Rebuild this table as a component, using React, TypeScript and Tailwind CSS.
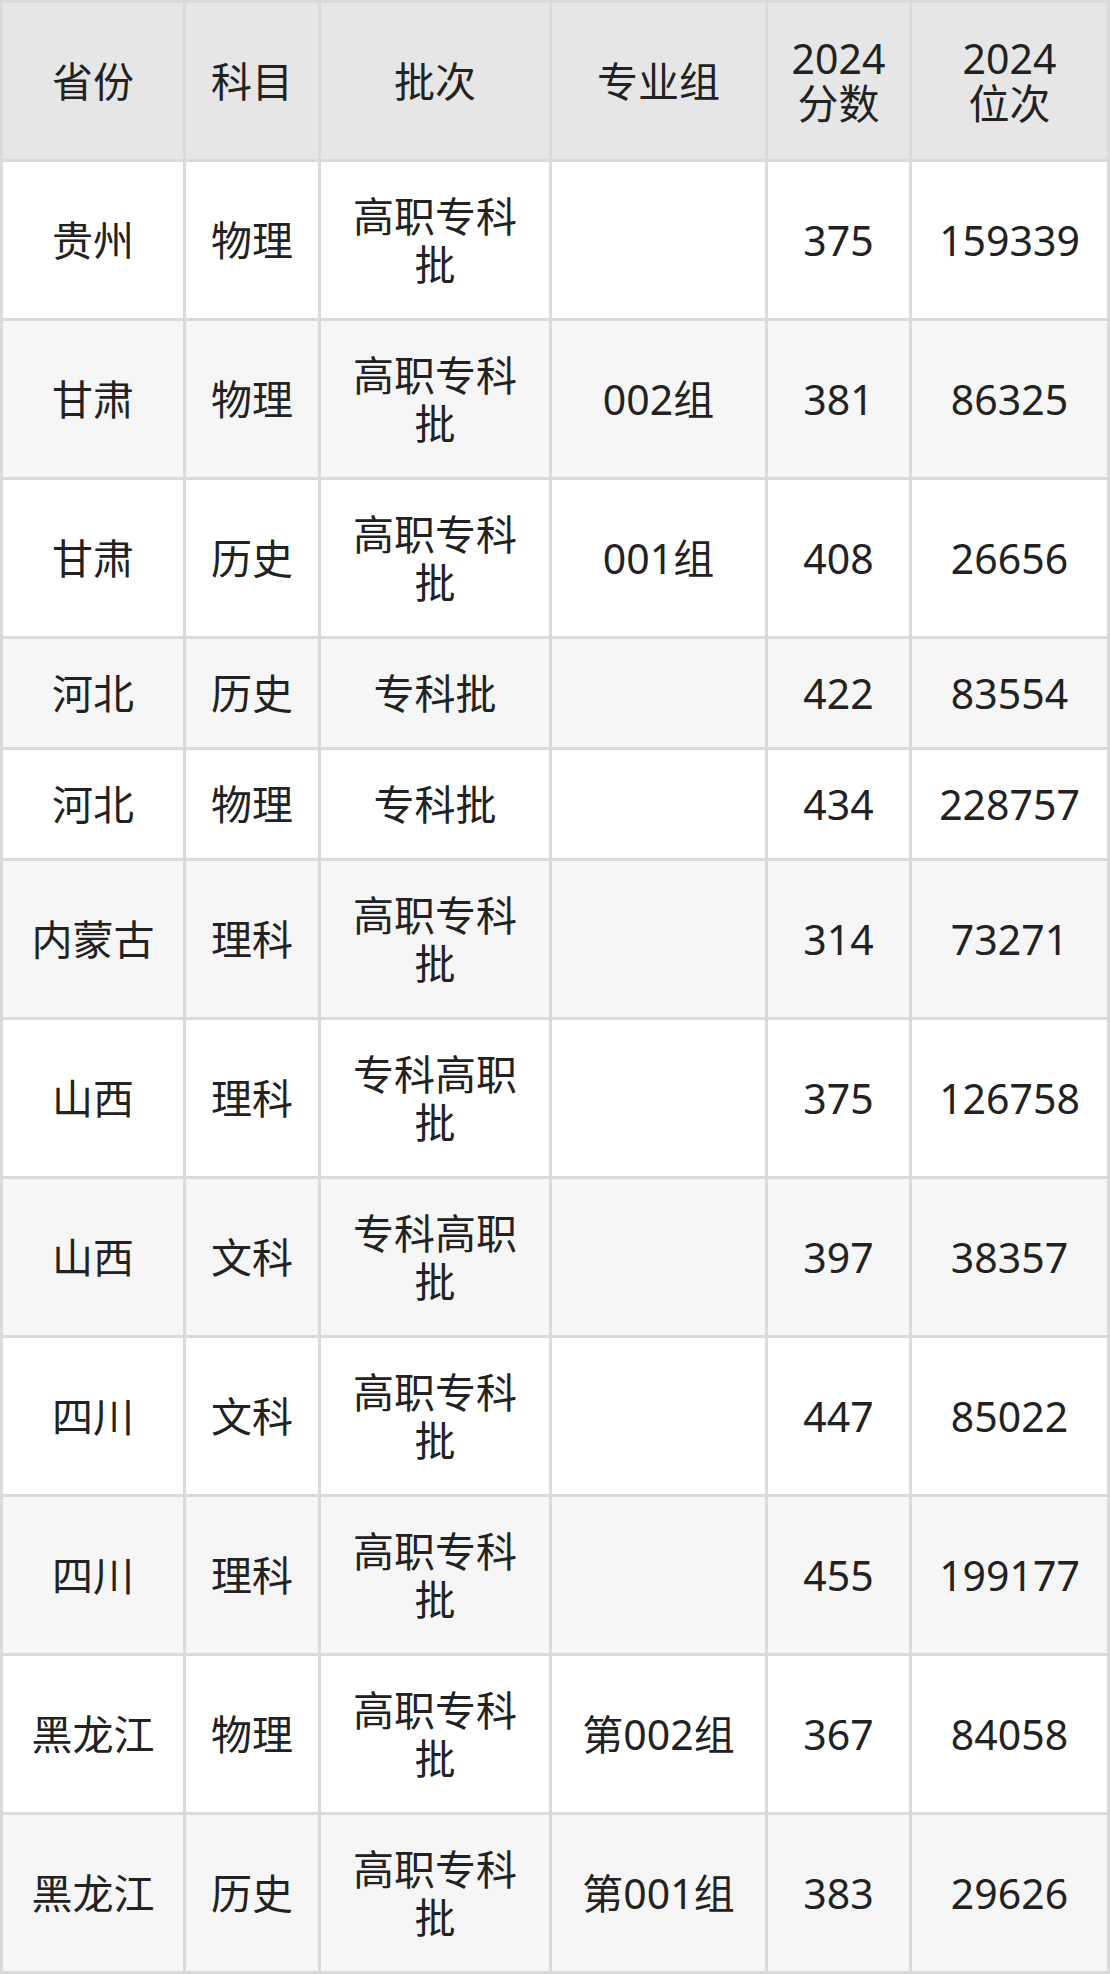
import React from "react";

type Row = {
  province: string;
  subject: string;
  batch: string[];
  group: string;
  score: string;
  rank: string;
};

const rows: Row[] = [
  { province: "贵州", subject: "物理", batch: ["高职专科", "批"], group: "", score: "375", rank: "159339" },
  { province: "甘肃", subject: "物理", batch: ["高职专科", "批"], group: "002组", score: "381", rank: "86325" },
  { province: "甘肃", subject: "历史", batch: ["高职专科", "批"], group: "001组", score: "408", rank: "26656" },
  { province: "河北", subject: "历史", batch: ["专科批"], group: "", score: "422", rank: "83554" },
  { province: "河北", subject: "物理", batch: ["专科批"], group: "", score: "434", rank: "228757" },
  { province: "内蒙古", subject: "理科", batch: ["高职专科", "批"], group: "", score: "314", rank: "73271" },
  { province: "山西", subject: "理科", batch: ["专科高职", "批"], group: "", score: "375", rank: "126758" },
  { province: "山西", subject: "文科", batch: ["专科高职", "批"], group: "", score: "397", rank: "38357" },
  { province: "四川", subject: "文科", batch: ["高职专科", "批"], group: "", score: "447", rank: "85022" },
  { province: "四川", subject: "理科", batch: ["高职专科", "批"], group: "", score: "455", rank: "199177" },
  { province: "黑龙江", subject: "物理", batch: ["高职专科", "批"], group: "第002组", score: "367", rank: "84058" },
  { province: "黑龙江", subject: "历史", batch: ["高职专科", "批"], group: "第001组", score: "383", rank: "29626" },
];

function Cell({ children, tall, bg }: { children?: React.ReactNode; tall: boolean; bg: string }) {
  return (
    <div
      className={`flex flex-col items-center justify-center text-center leading-[48px] ${tall ? "h-[156px]" : "h-[108px]"} ${bg}`}
    >
      {children}
    </div>
  );
}

function HeadCell({ lines }: { lines: string[] }) {
  return (
    <div className="flex h-[156px] flex-col items-center justify-center bg-[#e6e6e6] text-center leading-[45px]">
      {lines.map((l, i) => (
        <div key={i}>{l}</div>
      ))}
    </div>
  );
}

export default function App() {
  return (
    <div
      className="w-[1110px] bg-white text-[41px] text-[#222222]"
      style={{ fontFamily: '"Noto Sans", "Noto Sans CJK SC", sans-serif' }}
    >
      <div className="grid grid-cols-[180px_132px_228px_213px_141px_195px] gap-[3px] bg-[#dadada] p-[3px]">
        <HeadCell lines={["省份"]} />
        <HeadCell lines={["科目"]} />
        <HeadCell lines={["批次"]} />
        <HeadCell lines={["专业组"]} />
        <HeadCell lines={["2024", "分数"]} />
        <HeadCell lines={["2024", "位次"]} />
        {rows.map((r, i) => {
          const tall = r.batch.length > 1;
          const bg = i % 2 === 0 ? "bg-white" : "bg-[#f6f6f6]";
          return (
            <React.Fragment key={i}>
              <Cell tall={tall} bg={bg}>{r.province}</Cell>
              <Cell tall={tall} bg={bg}>{r.subject}</Cell>
              <Cell tall={tall} bg={bg}>
                {r.batch.map((b, j) => (
                  <div key={j}>{b}</div>
                ))}
              </Cell>
              <Cell tall={tall} bg={bg}>{r.group}</Cell>
              <Cell tall={tall} bg={bg}>{r.score}</Cell>
              <Cell tall={tall} bg={bg}>{r.rank}</Cell>
            </React.Fragment>
          );
        })}
      </div>
    </div>
  );
}
